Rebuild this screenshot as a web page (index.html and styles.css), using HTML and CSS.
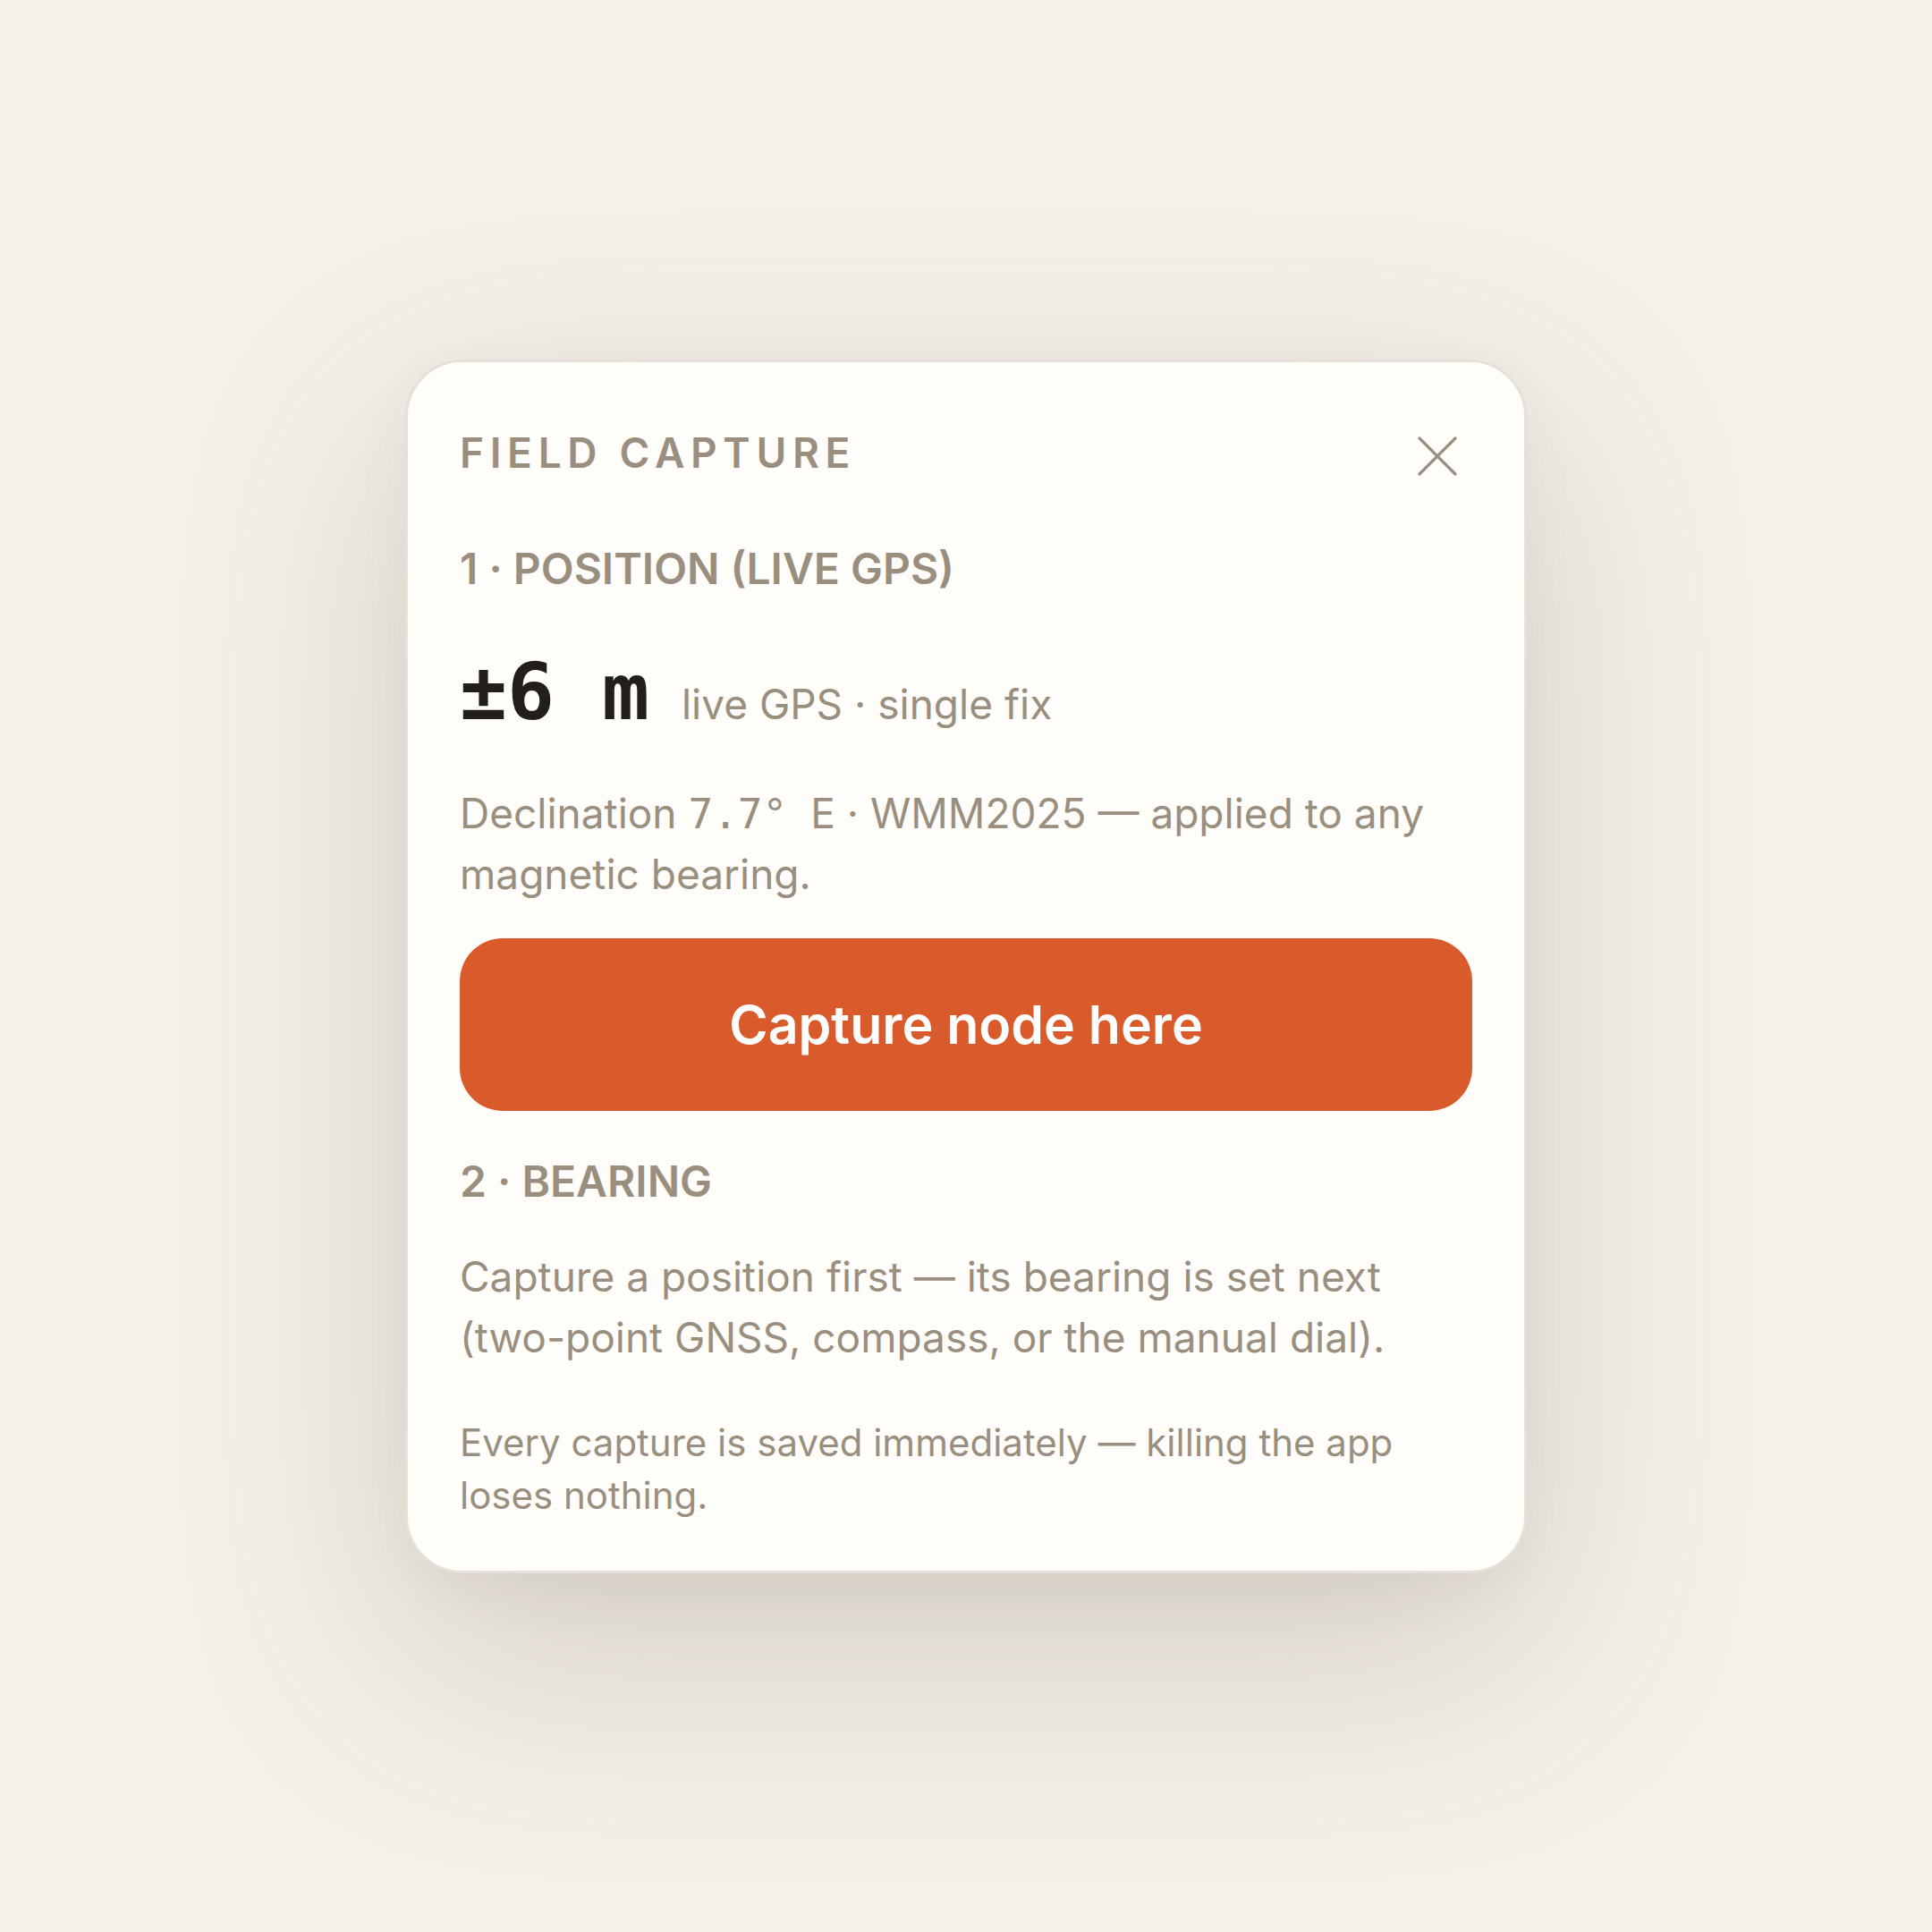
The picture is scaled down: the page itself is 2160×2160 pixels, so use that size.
FILE: index.html
```html
<!DOCTYPE html>
<html>
<head>
  <title>Field capture</title>
  <link rel="stylesheet" href="styles.css">
</head>
<body>
  <div class="sheet">
    <div class="sheet-head">
      <h1 class="sheet-title">FIELD CAPTURE</h1>
      <button class="close" aria-label="Close">
        <svg width="44" height="44" viewBox="0 0 44 44">
          <path d="M2 2 L42 42 M42 2 L2 42" stroke="#9a8f7f" stroke-width="3.2" stroke-linecap="round" fill="none"/>
        </svg>
      </button>
    </div>

    <h2 class="step">1 · POSITION (LIVE GPS)</h2>
    <div class="fix">
      <span class="fix-value">±6 m</span>
      <span class="fix-note">live GPS · single fix</span>
    </div>
    <p class="body decl">Declination <span class="mono">7.7°</span> E · WMM2025 — applied to any magnetic bearing.</p>

    <button class="capture">Capture node here</button>

    <h2 class="step">2 · BEARING</h2>
    <p class="body">Capture a position first — its bearing is set next (two-point GNSS, compass, or the manual dial).</p>

    <p class="note">Every capture is saved immediately — killing the app loses nothing.</p>
  </div>
</body>
</html>
```

FILE: styles.css
```css
/* page backdrop */
html, body {
  margin: 0;
  height: 100%;
}

body {
  display: flex;
  align-items: center;
  justify-content: center;
  background: #f4f0ea;
  font-family: Inter, "Noto Sans", sans-serif;
  color: #9a8f7f;
}

/* card */
.sheet {
  box-sizing: border-box;
  width: 1254px;
  padding: 63px 58px 55px;
  background: #fefdfa;
  border: 3px solid #e4e1da;
  border-radius: 64px;
  box-shadow: 0 90px 260px rgba(110, 95, 70, 0.24), 0 20px 60px rgba(110, 95, 70, 0.06);
}

.sheet-head {
  display: flex;
  align-items: center;
  justify-content: space-between;
}

.sheet-title {
  margin: 0;
  font-size: 46px;
  font-weight: 600;
  letter-spacing: 0.145em;
  line-height: 76px;
}

.close {
  border: none;
  background: none;
  padding: 0;
  margin: 8px 17px 0 0;
  display: flex;
  cursor: pointer;
}

.step {
  margin: 64px 0 0;
  font-size: 48px;
  font-weight: 600;
  line-height: 56px;
}

/* accuracy readout */
.fix {
  display: flex;
  align-items: baseline;
  gap: 36px;
  margin-top: 60px;
}

.fix-value {
  font-family: "DejaVu Sans Mono", monospace;
  font-weight: 700;
  font-size: 88px;
  color: #221e1a;
  line-height: 100px;
  white-space: pre;
}

.fix-note {
  font-size: 46px;
}

.body {
  margin: 44px 0 0;
  font-size: 46px;
  line-height: 68px;
}

.body.decl {
  margin-top: 52px;
  line-height: 67px;
}

.mono {
  font-family: "DejaVu Sans Mono", monospace;
  margin-right: 13px;
}

.capture {
  display: block;
  width: 100%;
  height: 193px;
  margin-top: 38px;
  border: none;
  border-radius: 48px;
  background: #d95a2a;
  color: #fff;
  font-family: Inter, "Noto Sans", sans-serif;
  font-size: 59px;
  font-weight: 600;
  cursor: pointer;
}

.capture + .step {
  margin-top: 51px;
}

.note {
  margin: 54px 0 0;
  font-size: 42px;
  line-height: 59px;
}
```
